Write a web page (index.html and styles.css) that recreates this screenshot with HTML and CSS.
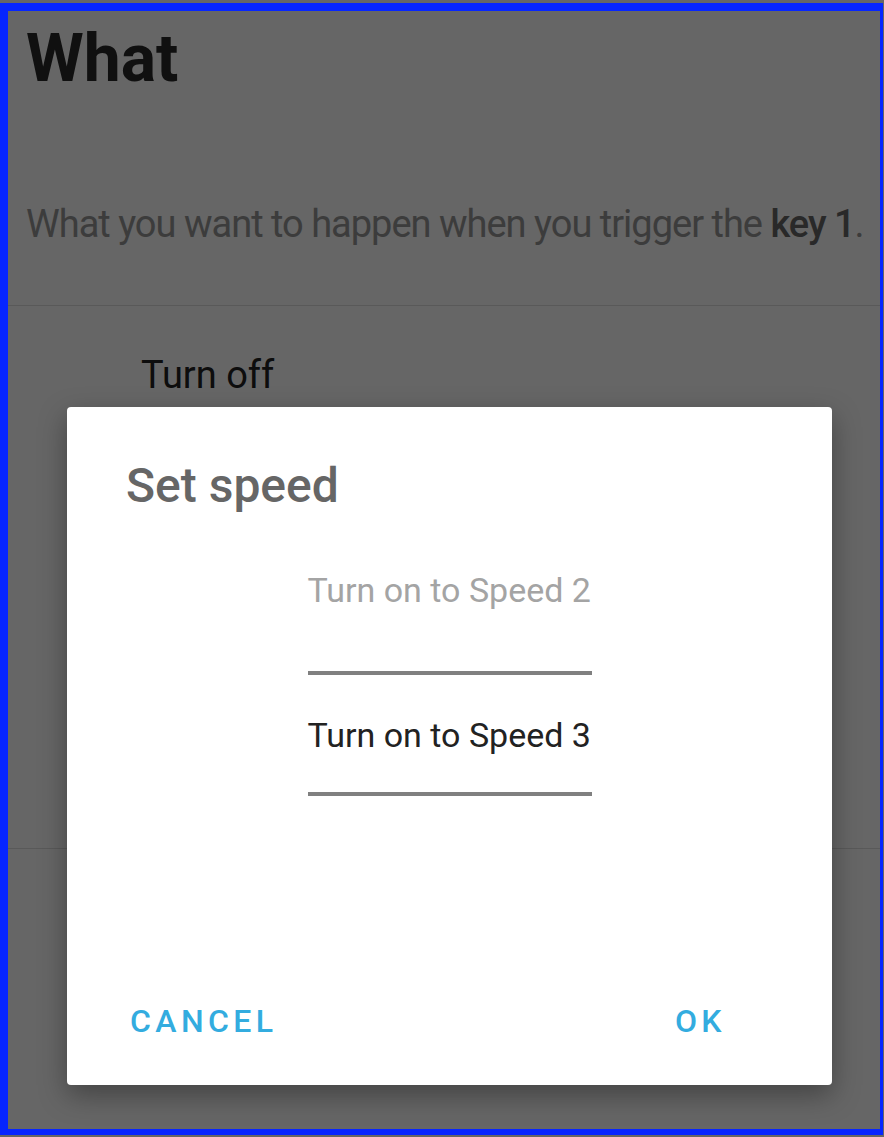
FILE: index.html
```html
<!DOCTYPE html>
<html lang="en">
  <head>
    <title>Key 1 - What</title>
    <link rel="stylesheet" href="styles.css">
  </head>
  <body>
  <div class="screen">
    <div class="page">
      <div class="page-header">
        <h1>What</h1>
        <p class="page-desc">What you want to happen when you trigger the <b>key 1</b>.</p>
      </div>
      <div class="option-list">
        <div class="option">Turn off</div>
      </div>
      <div class="option-list"></div>
    </div>

    <div class="scrim">
      <div class="dialog">
        <div class="dialog-title">Set speed</div>
        <div class="picker">
          <div class="pick-item faded">Turn on to Speed 2</div>
          <div class="pick-line"></div>
          <div class="pick-item selected">Turn on to Speed 3</div>
          <div class="pick-line last"></div>
        </div>
        <div class="dialog-actions">
          <button class="dialog-btn">CANCEL</button>
          <button class="dialog-btn">OK</button>
        </div>
      </div>
    </div>
  </div>
  </body>
</html>
```

FILE: styles.css
```css
:root {
  --frame: #0625ff;
  --accent: #33acdf;
  --divider: #dedede;
}

* {
  margin: 0;
  padding: 0;
  box-sizing: border-box;
  font-family: 'Roboto', 'Liberation Sans', sans-serif;
}

body {
  background: #666;
  height: 1137px;
  overflow: hidden;
}

.screen {
  position: relative;
  margin: 3px 1px 2px 0;
  height: 1132px;
  border: solid var(--frame);
  border-width: 8px 3px 6px 8px;
  background: #fff;
  overflow: hidden;
}

.page-header {
  padding: 8px 18px 0;
  border-bottom: 1px solid var(--divider);
}

.page-header h1 {
  font-size: 66px;
  line-height: 80px;
  font-weight: 700;
  color: #2a2a2a;
}

.page-desc {
  margin-top: 102px;
  margin-bottom: 58px;
  font-size: 38px;
  line-height: 46px;
  letter-spacing: -1px;
  color: #969696;
  white-space: nowrap;
}

.page-desc b {
  font-weight: 500;
  color: #666;
}

.option-list {
  min-height: 543px;
  border-bottom: 1px solid var(--divider);
  padding: 46px 0 0 133px;
}

.option {
  font-size: 38px;
  line-height: 46px;
  color: #222;
}

.scrim {
  position: absolute;
  inset: 0;
  background: rgba(0, 0, 0, 0.6);
  padding: 396px 0 0 59px;
}

.dialog {
  width: 765px;
  height: 678px;
  background: #fff;
  border-radius: 4px;
  box-shadow: 0 10px 28px rgba(0, 0, 0, 0.35);
  display: flex;
  flex-direction: column;
  padding: 51px 0 44px;
}

.dialog-title {
  padding-left: 59px;
  font-size: 48px;
  line-height: 56px;
  font-weight: 500;
  color: #666;
}

.picker {
  width: 284px;
  margin: 56px auto 0;
}

.pick-item {
  font-size: 34px;
  line-height: 40px;
  white-space: nowrap;
}

.pick-item.faded {
  color: #a4a4a4;
}

.pick-item.selected {
  margin-top: 40px;
  color: #222;
}

.pick-line {
  height: 4px;
  margin-top: 61px;
  background: #808080;
}

.pick-line.last {
  margin-top: 37px;
}

.dialog-actions {
  margin-top: auto;
  display: flex;
  justify-content: space-between;
  padding: 0 106px 0 63px;
}

.dialog-btn {
  background: none;
  border: none;
  font-size: 32px;
  line-height: 40px;
  font-weight: 500;
  letter-spacing: 4.4px;
  color: var(--accent);
  cursor: pointer;
}
```
